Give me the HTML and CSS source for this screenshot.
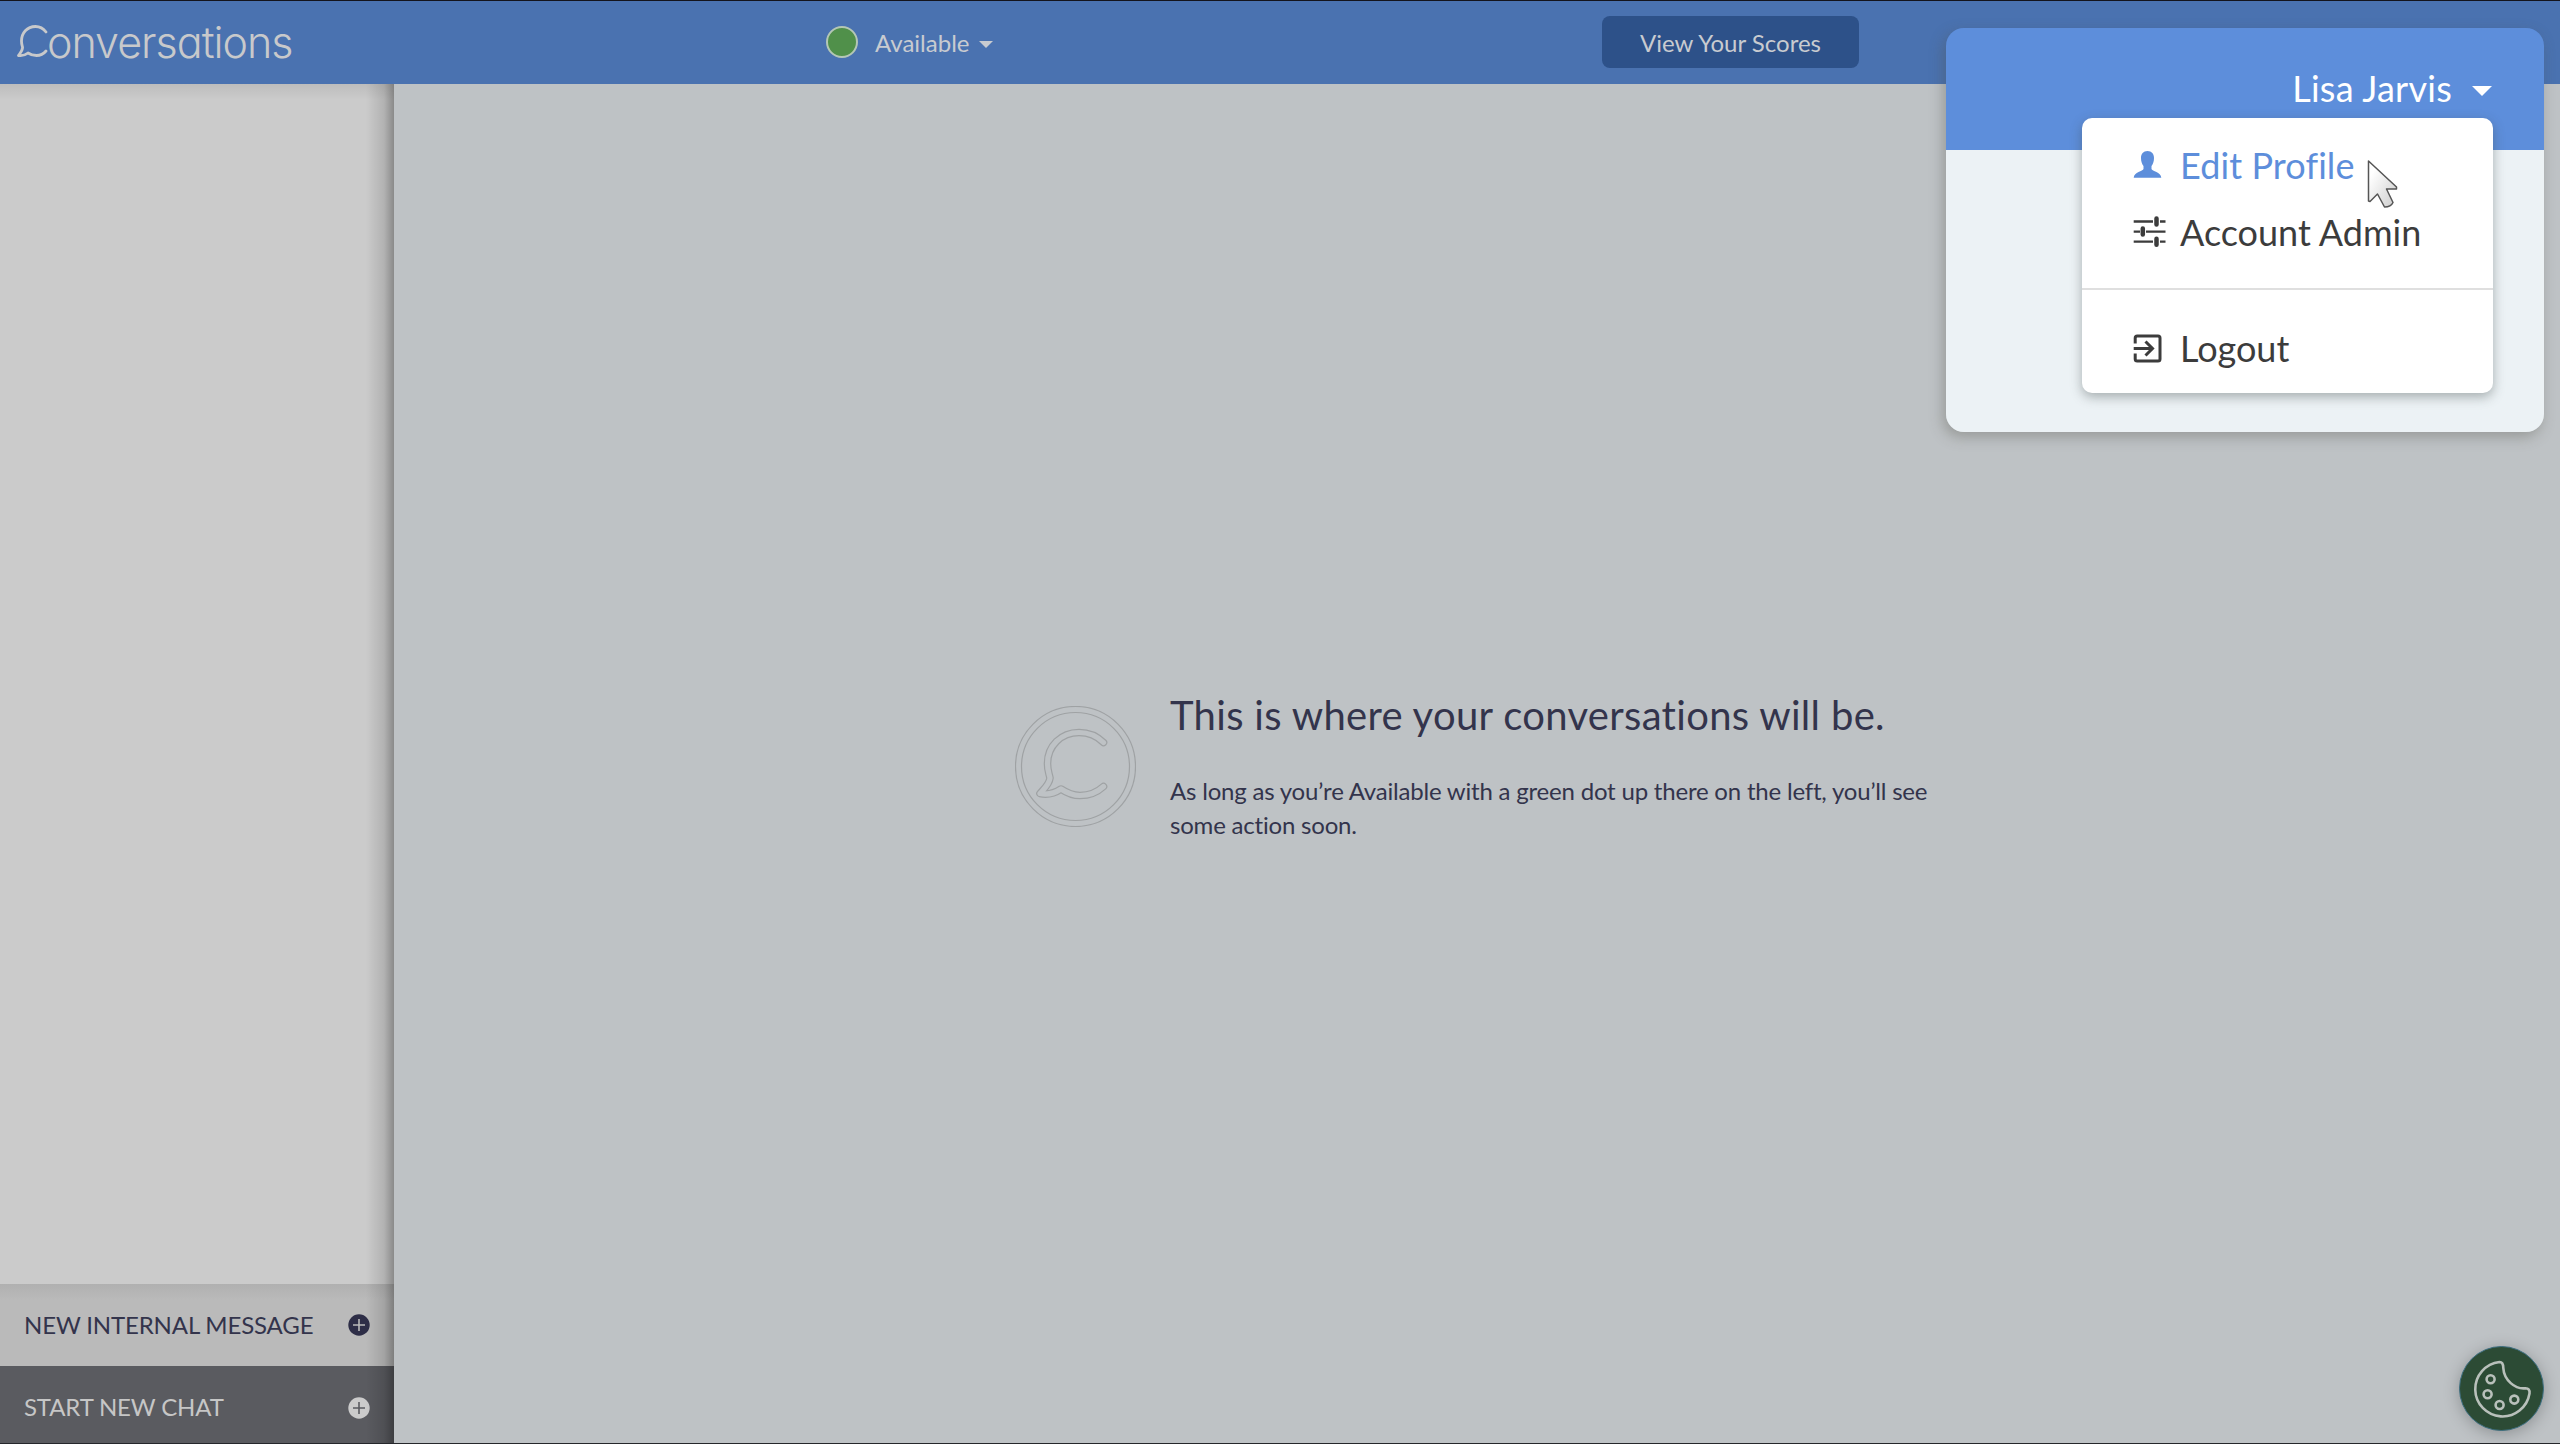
FILE: index.html
```html
<!DOCTYPE html>
<html lang="en">
<head>
  <meta charset="UTF-8">
  <meta name="viewport" content="width=device-width, initial-scale=1.0">
  <title>Conversations</title>
  <link rel="stylesheet" href="styles.css">
</head>
<body>

  <div class="app">
    <header class="topbar">
      <div class="brand">
        <svg class="brand-mark" width="34" height="36" viewBox="0 0 34 36">
          <path d="M29 8C26 4 22.500 2.500 18.500 2.500C10 2.500 4.500 9 4.500 17C4.500 20 5 21 5.500 23C6 26 3.500 28.500 1.500 31.500C5 32 8.500 31 11 29C14 31 16.500 31.500 19.500 31.500C23 31.500 26.500 30 29 27"/>
        </svg>
        <span class="brand-text">onversations</span>
      </div>
      <div class="status">
        <span class="status-dot"></span>
        <span class="status-label">Available</span>
        <span class="caret"></span>
      </div>
      <button class="scores-btn">View Your Scores</button>
    </header>

    <div class="body">
      <aside class="sidebar">
        <div class="chat-list"></div>
        <div class="side-action internal">
          <span>NEW INTERNAL MESSAGE</span>
          <svg class="plus" width="22" height="22" viewBox="0 0 22 22">
            <circle cx="11" cy="11" r="10.700"/>
            <path d="M11 5v12M5 11h12"/>
          </svg>
        </div>
        <div class="side-action start">
          <span>START NEW CHAT</span>
          <svg class="plus" width="22" height="22" viewBox="0 0 22 22">
            <circle cx="11" cy="11" r="10.700"/>
            <path d="M11 5v12M5 11h12"/>
          </svg>
        </div>
      </aside>

      <main class="main">
        <div class="empty">
          <svg class="empty-icon" width="121" height="121" viewBox="0 0 121 121">
            <circle cx="60.500" cy="60.500" r="60"/>
            <circle cx="60.500" cy="60.500" r="54"/>
            <path class="bubble-line" d="M88.500 36.500C82 30 73.500 26.500 64 26.500C46 26.500 32.500 40 32.500 57.500C32.500 65 34 67 35 72C34.500 78 29 83 25 87.500C32 89 40 87 46 83C52 87 58 89.500 65 89.500C74 89.500 82 86.500 88.500 80.500"/>
            <path class="bubble-fill" d="M88.500 36.500C82 30 73.500 26.500 64 26.500C46 26.500 32.500 40 32.500 57.500C32.500 65 34 67 35 72C34.500 78 29 83 25 87.500C32 89 40 87 46 83C52 87 58 89.500 65 89.500C74 89.500 82 86.500 88.500 80.500"/>
          </svg>
          <div class="empty-text">
            <h1>This is where your conversations will be.</h1>
            <p>As long as you’re Available with a green dot up there on the left, you’ll see some action soon.</p>
          </div>
        </div>
      </main>
    </div>
  </div>

  <!-- Highlighted account menu -->
  <section class="spotlight">
    <div class="account">
      <span>Lisa Jarvis</span>
      <span class="caret"></span>
    </div>
    <nav class="menu">
      <a class="menu-item active">
        <svg width="34" height="34" viewBox="0 0 34 34">
          <path fill="currentColor" d="M14.500 3C18.700 3 21 6 21 10C21 13.500 20 16 18.500 18V21C19 23 28 24 28.300 29.700H.700C1 24 10 23 10.500 21V18C9 16 8 13.500 8 10C8 6 10.300 3 14.500 3Z"/>
        </svg>
        <span>Edit Profile</span>
      </a>
      <a class="menu-item">
        <svg width="34" height="34" viewBox="0 0 34 34">
          <path stroke="currentColor" stroke-width="2.300" fill="none" d="M.700 6.500H20M27 6.500H32.500M.700 16.700H7M13 16.700H32.500M.700 26.700H20M27 26.700H32.500"/>
          <path stroke="currentColor" stroke-width="4.500" stroke-linecap="round" fill="none" d="M23.500 3.500V9.500M9.800 13.500V19.500M23.500 23.700V29.700"/>
        </svg>
        <span>Account Admin</span>
      </a>
      <hr>
      <a class="menu-item">
        <svg width="34" height="34" viewBox="0 0 34 34">
          <path stroke="currentColor" stroke-width="3" fill="none" d="M2.200 12.500V7Q2.200 5 4.200 5H25Q27 5 27 7V28Q27 30 25 30H4.200Q2.200 30 2.200 28V22.500M.700 17.500H19M12.500 10.500L19.500 17.500L12.500 24.500"/>
        </svg>
        <span>Logout</span>
      </a>
    </nav>
    <svg class="cursor" width="32" height="50" viewBox="0 0 32 50">
      <defs>
        <linearGradient id="cursorFill" x1="0" y1="0" x2="1" y2="1">
          <stop offset="0.200" stop-color="#fff"/>
          <stop offset="1" stop-color="#ccc"/>
        </linearGradient>
      </defs>
      <path d="M1.500 2V42L3 42.500L10.500 35L17.500 48Q24 48 26 43.500L19.500 30H29.500V28Z" fill="url(#cursorFill)" stroke="#555" stroke-width="1.500" stroke-linejoin="round"/>
    </svg>
  </section>

  <!-- Cookie settings -->
  <button class="cookie-btn" aria-label="Cookie settings">
    <svg width="84" height="84" viewBox="0 0 84 84">
      <path d="M39.500 15A27.300 27.300 0 1 0 69.500 46.500C70 43 68.500 41.300 65.500 41.300C55 42.500 44 33 43.300 21C43.300 17 42.500 15 39.500 15Z"/>
      <circle cx="30.600" cy="32.300" r="4"/>
      <circle cx="27.600" cy="47.300" r="4"/>
      <circle cx="39.600" cy="58" r="4"/>
      <circle cx="54.300" cy="52.600" r="4"/>
    </svg>
  </button>

</body>
</html>
```

FILE: styles.css
```css
* {
  box-sizing: border-box;
}

body {
  margin: 0;
  font-family: Lato, "Liberation Sans", sans-serif;
  font-size: 24px;
  color: #33344c;
  background: #bec2c5;
  overflow: hidden;
}

button {
  font: inherit;
  border: 0;
  padding: 0;
}

.app {
  display: flex;
  flex-direction: column;
  height: 1444px;
  border-top: 1px solid #14141c;
  border-bottom: 1px solid #25272b;
}

/* Top bar */
.topbar {
  display: grid;
  grid-template-columns: 809px 776px 257px;
  align-items: center;
  flex: none;
  height: 83px;
  padding: 0 0 1px 17px;
  background: #4a72b0;
  color: #c8cbd0;
}

.brand {
  display: flex;
  align-items: center;
}

.brand-mark {
  flex: none;
  margin-right: -4px;
  fill: none;
  stroke: #c8c9cb;
  stroke-width: 2.8;
  stroke-linecap: round;
  stroke-linejoin: round;
}

.brand-text {
  font-family: Inter, Lato, sans-serif;
  font-size: 43px;
  font-weight: 300;
  line-height: 46px;
  letter-spacing: -1px;
  font-feature-settings: "cv11";
  color: #c8c9cb;
}

.status {
  display: flex;
  align-items: center;
}

.status-dot {
  width: 32px;
  height: 32px;
  margin-right: 17px;
  border: 2px solid #b4c7b5;
  border-radius: 50%;
  background: #50904a;
}

.caret {
  width: 0;
  height: 0;
  border-left: 7px solid transparent;
  border-right: 7px solid transparent;
  border-top: 7px solid currentColor;
}

.status .caret {
  margin: 5px 0 0 10px;
}

.scores-btn {
  height: 52px;
  border-radius: 8px;
  background: #2d5189;
  color: #c8cbd0;
}

/* Sidebar */
.body {
  display: flex;
  flex: 1;
}

.sidebar {
  display: flex;
  flex-direction: column;
  position: relative;
  width: 394px;
  background: #cbcbcb;
}

/* shade along the top and right edge */
.sidebar::after {
  content: "";
  position: absolute;
  inset: 0;
  background:
    linear-gradient(to left, rgba(0, 0, 0, 0.32), rgba(0, 0, 0, 0.12) 10px, transparent 28px),
    linear-gradient(rgba(0, 0, 0, 0.07), transparent 16px);
}

.chat-list {
  flex: 1;
}

.side-action {
  display: flex;
  align-items: center;
  justify-content: space-between;
  padding: 0 24px;
  letter-spacing: -0.15px;
}

.side-action span {
  padding-bottom: 2px;
}

.internal {
  height: 82px;
  background: linear-gradient(#b0b0b0, #bababa 16px);
}

.start {
  height: 77px;
  padding-top: 6px;
  background: #5a5b60;
  color: #c6c6c6;
}

.plus circle {
  fill: #2e2e47;
}

.plus path {
  stroke: #bababa;
  stroke-width: 1.6;
}

.start .plus circle {
  fill: #cbcbcb;
}

.start .plus path {
  stroke: #5a5b60;
}

/* Empty state */
.main {
  flex: 1;
  display: flex;
  align-items: center;
  justify-content: center;
  padding-top: 5px;
}

.empty {
  display: flex;
  align-items: center;
  gap: 34px;
}

.empty-icon {
  fill: none;
  stroke: #9fa2a4;
  stroke-width: 1.2;
}

.bubble-line,
.bubble-fill {
  stroke-linecap: round;
  stroke-linejoin: round;
}

.bubble-line {
  stroke-width: 7.6;
}

.bubble-fill {
  stroke: #bec2c5;
  stroke-width: 5.2;
}

.empty-text {
  width: 769px;
  font-variant-ligatures: none;
}

.empty-text h1 {
  margin: 0 0 35px;
  font-size: 40px;
  font-weight: 400;
  line-height: 48px;
  letter-spacing: 0.32px;
}

.empty-text p {
  margin: 0;
  line-height: 34px;
  letter-spacing: -0.2px;
}

/* Account panel */
.spotlight {
  position: absolute;
  top: 28px;
  left: 1946px;
  width: 598px;
  height: 404px;
  border-radius: 18px;
  background: linear-gradient(#5d8edb 122px, #ecf2f5 122px);
  box-shadow: -3px 5px 14px rgba(80, 80, 70, 0.35);
}

.account {
  display: flex;
  align-items: center;
  justify-content: flex-end;
  height: 90px;
  padding: 30px 52px 0 0;
  font-size: 36px;
  letter-spacing: 0.25px;
  color: #fff;
}

.account .caret {
  margin: 6px 0 0 20px;
  border-width: 10px 10px 0;
}

.menu {
  width: 411px;
  height: 275px;
  margin-left: 136px;
  padding-top: 14px;
  border-radius: 10px;
  background: #fff;
  box-shadow: 0 4px 12px rgba(60, 70, 70, 0.4);
}

.menu-item {
  display: flex;
  align-items: center;
  gap: 13px;
  height: 67px;
  padding-left: 51px;
  font-size: 36px;
  color: #3c3c3c;
}

.menu-item.active {
  height: 66px;
  color: #5d8edb;
}

.menu-item.active span {
  letter-spacing: 0.1px;
  font-variant-ligatures: common-ligatures;
}

.menu hr {
  height: 2px;
  margin: 23px 0 24px;
  border: 0;
  background: #dfdfdf;
}

.cursor {
  position: absolute;
  left: 421px;
  top: 131px;
}

.cookie-btn {
  position: absolute;
  left: 2459px;
  top: 1346px;
  width: 85px;
  height: 85px;
  border: 1px solid #3c6e80;
  border-radius: 50%;
  background: #2c4b35;
  box-shadow: 0 3px 16px rgba(0, 0, 0, 0.25);
}

.cookie-btn svg {
  display: block;
  fill: none;
  stroke: #b9c0bb;
  stroke-width: 2.6;
}
```
